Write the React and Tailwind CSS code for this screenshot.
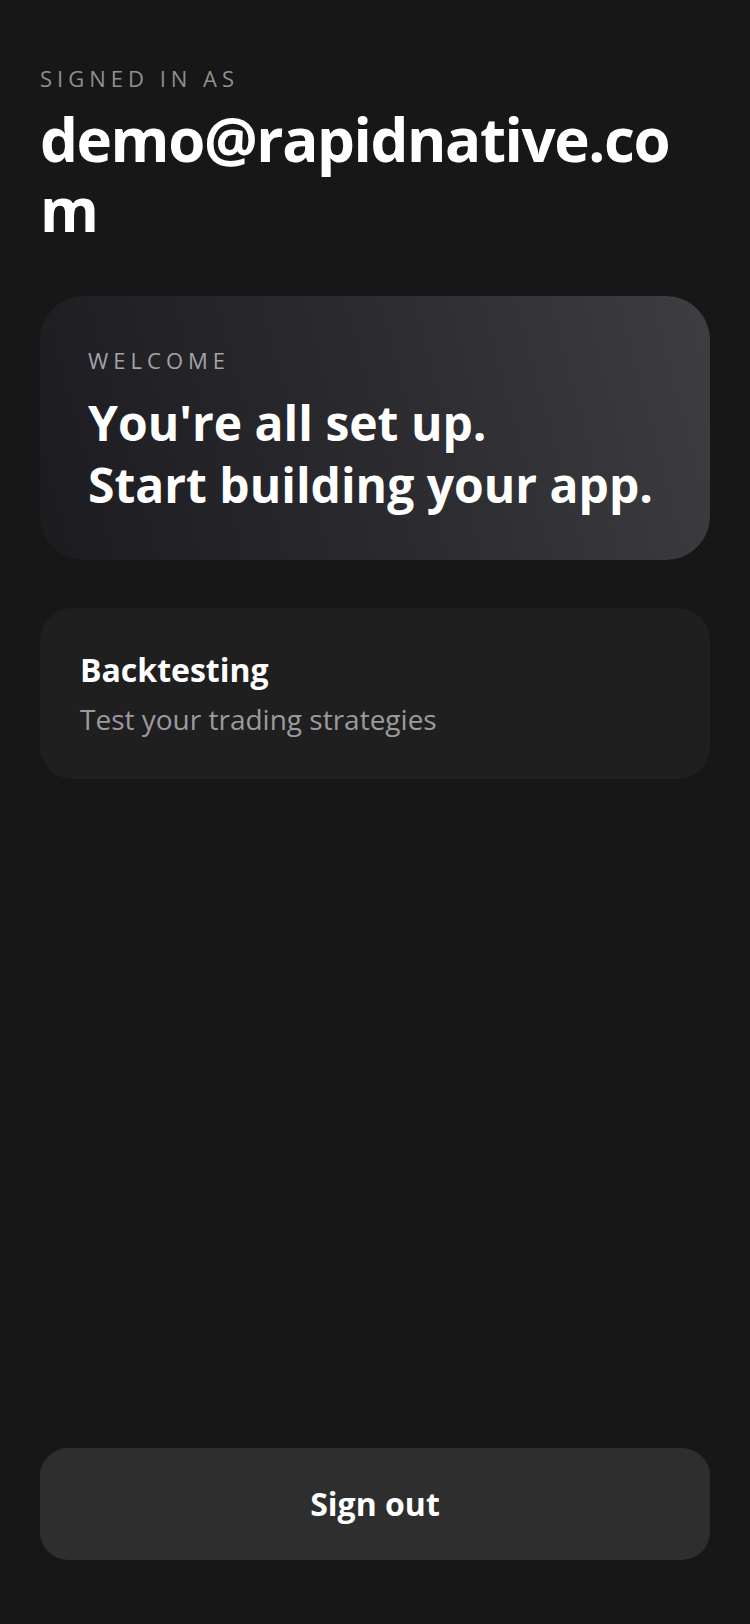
import React from "react";

export default function App() {
  return (
    <div
      className="min-h-screen w-full bg-[#171717] text-white flex flex-col px-10 pt-[62px] pb-16"
      style={{ fontFamily: '"Open Sans", "Noto Sans", sans-serif' }}
    >
      {/* Account */}
      <p className="text-[22px] tracking-[5px] text-[#8f8f94] uppercase">Signed in as</p>
      <h1 className="mt-[9px] text-[60px] leading-[70px] tracking-[-1.4px] font-bold break-all">
        demo@rapidnative.com
      </h1>

      {/* Welcome card */}
      <div className="mt-[52px] rounded-[44px] bg-linear-[75deg] from-[#1c1c20] via-[#2a2a2f] to-[#3d3d42] pl-12 pr-8 pt-12 pb-[44px]">
        <p className="text-[22px] tracking-[5px] text-[#a3a3a8] uppercase">Welcome</p>
        <h2 className="mt-[15px] text-[48px] leading-[62px] font-bold">
          You're all set up.
          <br />
          Start building your app.
        </h2>
      </div>

      {/* Feature card */}
      <div className="mt-[48px] rounded-[32px] bg-[#1f1f20] px-10 pt-10 pb-[41px]">
        <p className="text-[32px] leading-[44px] font-bold">Backtesting</p>
        <p className="mt-2 text-[28px] leading-[38px] text-[#9b9b9f]">Test your trading strategies</p>
      </div>

      {/* Sign out */}
      <button className="mt-auto h-[112px] w-full rounded-[28px] bg-[#2e2e2e] text-[32px] font-bold text-white">
        Sign out
      </button>
    </div>
  );
}
